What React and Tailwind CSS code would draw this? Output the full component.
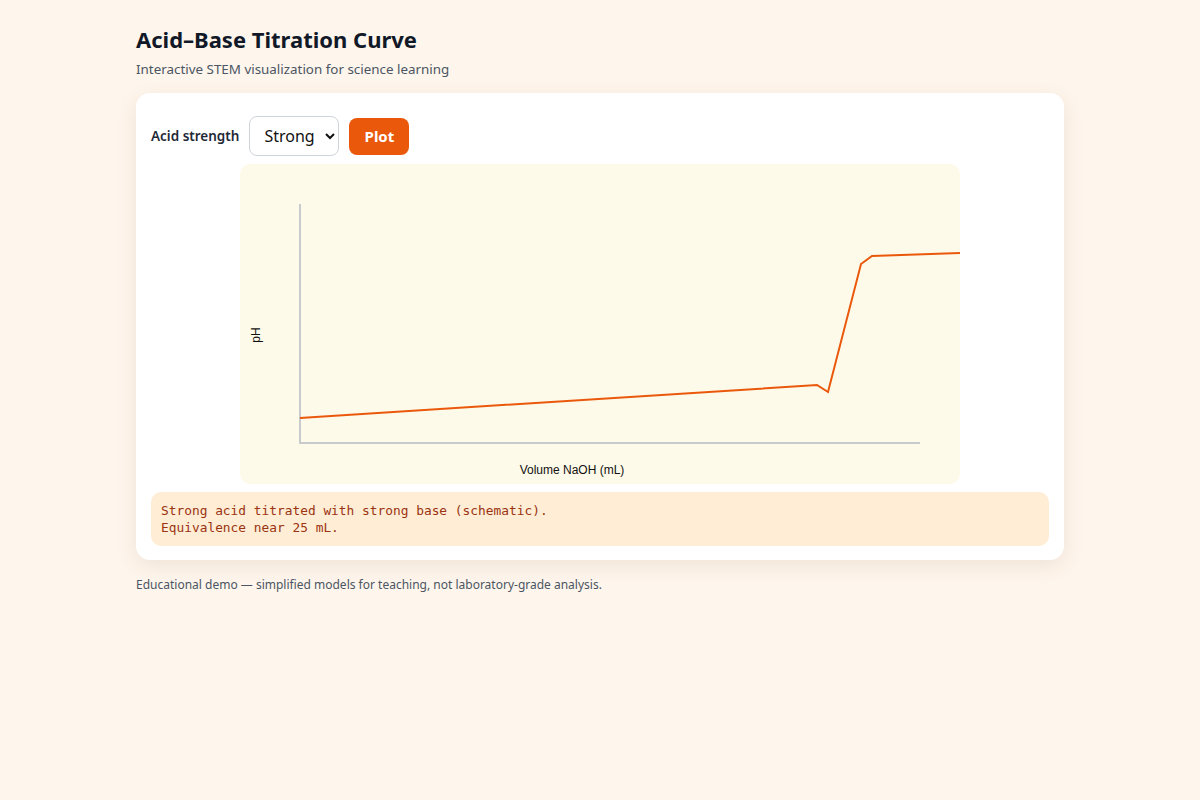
import { useState } from "react";

// schematic titration curve, in chart pixel coordinates (720 x 320 box)
const curves = {
  Strong: {
    points: [
      [60, 254],
      [577, 221],
      [588, 228],
      [621, 100],
      [632, 92],
      [720, 89],
    ],
    note: "Strong acid titrated with strong base (schematic).\nEquivalence near 25 mL.",
  },
  Weak: {
    points: [
      [60, 230],
      [120, 200],
      [500, 180],
      [577, 165],
      [600, 120],
      [632, 92],
      [720, 89],
    ],
    note: "Weak acid titrated with strong base (schematic).\nEquivalence near 25 mL.",
  },
};

function TitrationChart({ points }) {
  return (
    <svg
      width="720"
      height="320"
      viewBox="0 0 720 320"
      className="block rounded-[10px] bg-[#fefae9]"
      style={{ fontFamily: '"Liberation Sans", Arial, sans-serif' }}
    >
      {/* axes */}
      <line x1="60" y1="40" x2="60" y2="280" stroke="#c8cacc" strokeWidth="2" />
      <line x1="59" y1="279" x2="680" y2="279" stroke="#c8cacc" strokeWidth="2" />
      <text x="332" y="310" textAnchor="middle" fontSize="12" fill="#111">
        Volume NaOH (mL)
      </text>
      <text
        x="20"
        y="171"
        textAnchor="middle"
        fontSize="12"
        fill="#111"
        transform="rotate(-90 20 171)"
      >
        pH
      </text>
      <polyline
        points={points.map((p) => p.join(",")).join(" ")}
        fill="none"
        stroke="#ea580c"
        strokeWidth="2"
        strokeLinejoin="miter"
      />
    </svg>
  );
}

export default function App() {
  const [strength, setStrength] = useState("Strong");
  const [plotted, setPlotted] = useState("Strong");
  const data = curves[plotted];

  return (
    <div
      className="min-h-screen bg-[#fef5ec] text-[#1f2937]"
      style={{ fontFamily: '"Noto Sans", "Open Sans", sans-serif' }}
    >
      <div className="mx-auto max-w-[928px] pt-[24px]">
        <h1 className="text-[22px] font-bold leading-[30px] text-[#111827]">
          Acid–Base Titration Curve
        </h1>
        <p className="mt-[5px] text-[13.4px] text-[#4b5563]">
          Interactive STEM visualization for science learning
        </p>

        <div className="mt-[14px] rounded-[14px] bg-white px-[15px] pb-[14px] pt-[23px] shadow-[0_6px_20px_rgba(120,80,40,0.10)]">
          <div className="flex items-center gap-[10px]">
            <span className="text-[13.5px] font-semibold text-[#1f2937]">Acid strength</span>
            <select
              value={strength}
              onChange={(e) => setStrength(e.target.value)}
              className="h-[40px] w-[90px] rounded-lg border border-[#cfd4da] bg-white pl-[10px] pr-[4px] text-[16px] text-[#111]"
            >
              <option>Strong</option>
              <option>Weak</option>
            </select>
            <button
              onClick={() => setPlotted(strength)}
              className="h-[37px] w-[60px] rounded-lg bg-[#ea580c] text-[15px] font-bold text-white"
            >
              Plot
            </button>
          </div>

          <div className="mt-[8px] flex justify-center">
            <TitrationChart points={data.points} />
          </div>

          <pre
            className="mt-[8px] rounded-[10px] bg-[#ffedd5] px-[10px] py-[10px] text-[12.85px] leading-[17px] text-[#9a3412]"
            style={{ fontFamily: '"DejaVu Sans Mono", monospace' }}
          >
            {data.note}
          </pre>
        </div>

        <p className="mt-[16px] text-[12px] text-[#4b5563]">
          Educational demo — simplified models for teaching, not laboratory-grade analysis.
        </p>
      </div>
    </div>
  );
}
